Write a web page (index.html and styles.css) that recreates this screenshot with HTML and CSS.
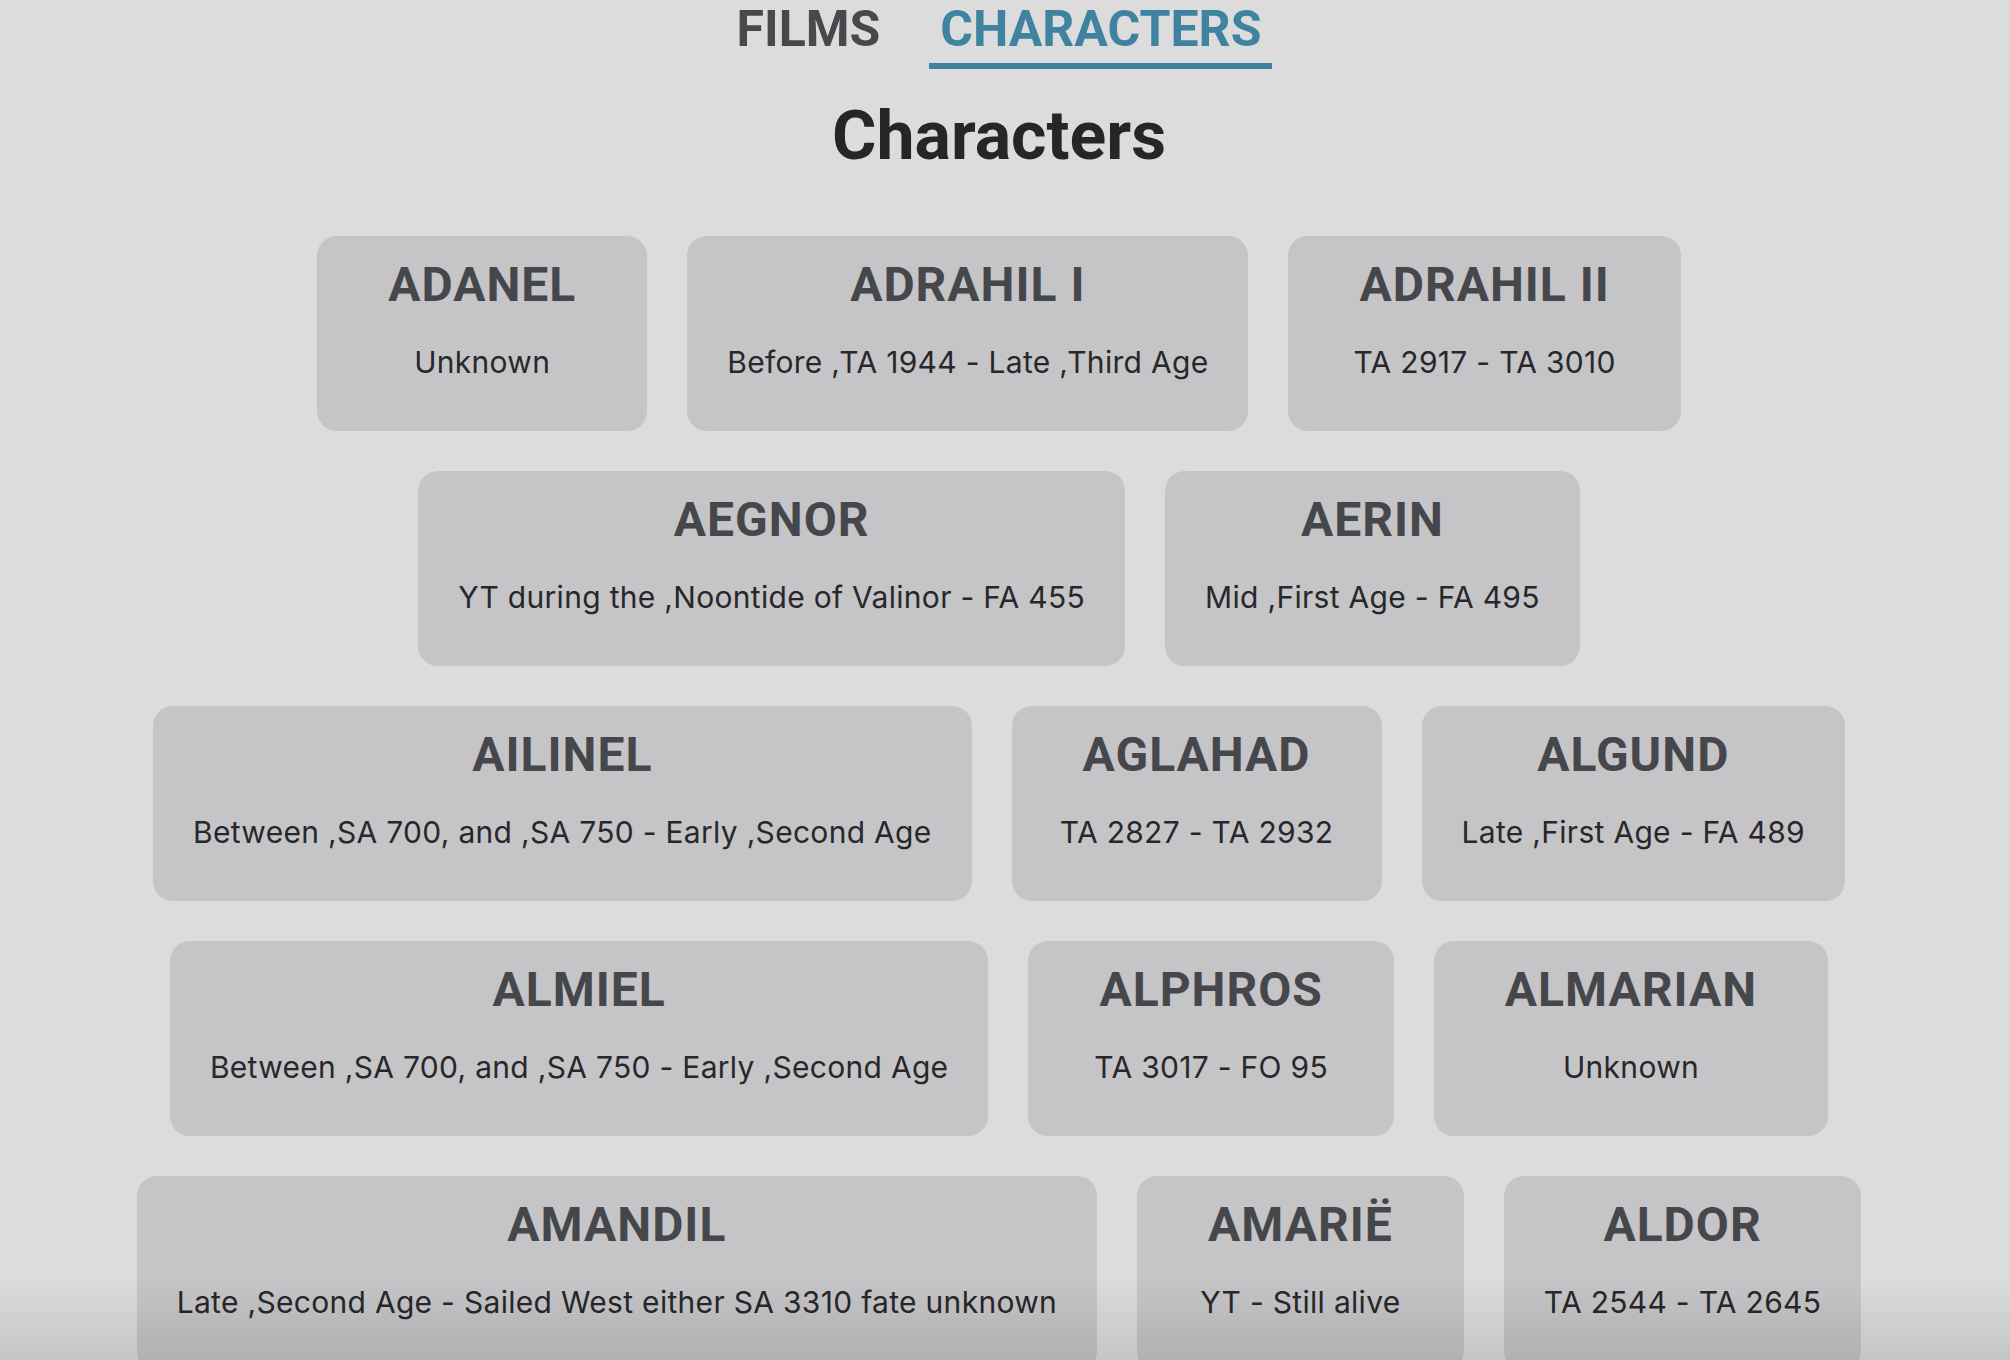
FILE: index.html
```html
<!DOCTYPE html>
<html lang="en">
<head>
<meta charset="utf-8">
<title>Characters</title>
<link rel="stylesheet" href="styles.css">
</head>
<body>
<div class="app">
  <nav class="tabs">
    <a class="tab">FILMS</a>
    <a class="tab tab-active">CHARACTERS</a>
  </nav>
  <h1 class="page-title">Characters</h1>
  <div class="grid">
    <div class="card"><h2 class="card-name">ADANEL</h2><p class="card-dates">Unknown</p></div>
    <div class="card"><h2 class="card-name">ADRAHIL I</h2><p class="card-dates">Before ,TA 1944 - Late ,Third Age</p></div>
    <div class="card"><h2 class="card-name">ADRAHIL II</h2><p class="card-dates">TA 2917 - TA 3010</p></div>
    <div class="card"><h2 class="card-name">AEGNOR</h2><p class="card-dates">YT during the ,Noontide of Valinor - FA 455</p></div>
    <div class="card"><h2 class="card-name">AERIN</h2><p class="card-dates">Mid ,First Age - FA 495</p></div>
    <div class="card"><h2 class="card-name">AILINEL</h2><p class="card-dates">Between ,SA 700, and ,SA 750 - Early ,Second Age</p></div>
    <div class="card"><h2 class="card-name">AGLAHAD</h2><p class="card-dates">TA 2827 - TA 2932</p></div>
    <div class="card"><h2 class="card-name">ALGUND</h2><p class="card-dates">Late ,First Age - FA 489</p></div>
    <div class="card"><h2 class="card-name">ALMIEL</h2><p class="card-dates">Between ,SA 700, and ,SA 750 - Early ,Second Age</p></div>
    <div class="card"><h2 class="card-name">ALPHROS</h2><p class="card-dates">TA 3017 - FO 95</p></div>
    <div class="card"><h2 class="card-name">ALMARIAN</h2><p class="card-dates">Unknown</p></div>
    <div class="card"><h2 class="card-name">AMANDIL</h2><p class="card-dates">Late ,Second Age - Sailed West either SA 3310 fate unknown</p></div>
    <div class="card"><h2 class="card-name">AMARIË</h2><p class="card-dates">YT - Still alive</p></div>
    <div class="card"><h2 class="card-name">ALDOR</h2><p class="card-dates">TA 2544 - TA 2645</p></div>
  </div>
</div>
<div class="window-shade"></div>
</body>
</html>
```

FILE: styles.css
```css
html {
  overflow: hidden;
  background: #dcdcdc;
}

body {
  margin: 0;
  padding-right: 12px;
  background: #dcdcdc;
  font-family: Roboto, "Liberation Sans", sans-serif;
}

.app {
  display: flex;
  flex-direction: column;
  align-items: center;
}

.tabs {
  display: flex;
  justify-content: center;
  gap: 38px;
}

.tab {
  font-family: Roboto, "Liberation Sans", sans-serif;
  font-weight: 700;
  font-size: 50px;
  line-height: 58px;
  padding: 0 11px 5px;
  border-bottom: 6px solid transparent;
  color: #48494d;
}

.tab-active {
  color: #3f83a0;
  border-bottom-color: #3f83a0;
}

.page-title {
  margin: 27px 0 0;
  font-size: 68px;
  line-height: 80px;
  font-weight: 700;
  color: #262626;
}

.grid {
  margin-top: 60px;
  padding: 0 60px;
  display: flex;
  flex-wrap: wrap;
  justify-content: center;
  gap: 40px;
}

.card {
  background: #c5c4c7;
  border-radius: 20px;
  padding: 21px 40px 20px;
  text-align: center;
}

.card-name {
  margin: 0;
  padding: 0 31px;
  font-size: 48px;
  line-height: 56px;
  font-weight: 700;
  letter-spacing: 1px;
  color: #46474b;
}

.card-dates {
  margin: 31px 0 31px;
  font-family: Inter, Roboto, sans-serif;
  font-size: 30px;
  line-height: 36px;
  letter-spacing: 0.3px;
  color: #28282a;
  white-space: nowrap;
}

.window-shade {
  position: fixed;
  left: 0;
  right: 0;
  bottom: 0;
  height: 80px;
  background: linear-gradient(to bottom, rgba(0, 0, 0, 0), rgba(0, 0, 0, 0.1));
  pointer-events: none;
}
```
